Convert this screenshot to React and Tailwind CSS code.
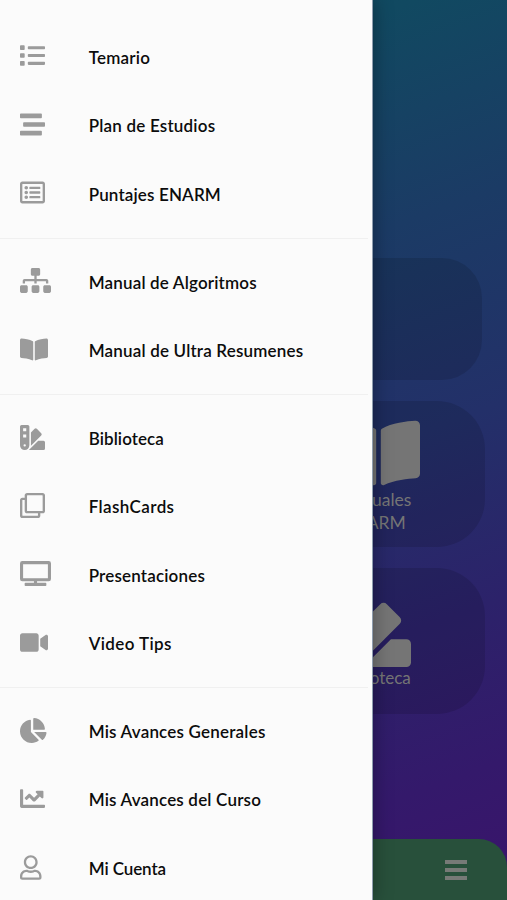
import React from 'react';
import {
  FaBookOpen,
  FaChartLine,
  FaChartPie,
  FaList,
  FaRegClone,
  FaRegListAlt,
  FaRegUser,
  FaSitemap,
  FaStream,
  FaSwatchbook,
  FaTv,
  FaVideo,
} from 'react-icons/fa';

const menuGroups = [
  [
    { label: 'Temario', icon: FaList, size: 'w-[25px]', spacing: 'tracking-[0.22px]' },
    { label: 'Plan de Estudios', icon: FaStream, size: 'w-[25px]', spacing: 'tracking-[0.2px]' },
    { label: 'Puntajes ENARM', icon: FaRegListAlt, size: 'w-[25px]', spacing: 'tracking-[0.15px]' },
  ],
  [
    { label: 'Manual de Algoritmos', icon: FaSitemap, size: 'w-[31px]', spacing: 'tracking-[0.17px]' },
    { label: 'Manual de Ultra Resumenes', icon: FaBookOpen, size: 'w-[28px]', spacing: 'tracking-[0.18px]' },
  ],
  [
    { label: 'Biblioteca', icon: FaSwatchbook, size: 'w-[25px]', spacing: 'tracking-[0.08px]' },
    { label: 'FlashCards', icon: FaRegClone, size: 'w-[25px]', spacing: 'tracking-[0.4px]' },
    { label: 'Presentaciones', icon: FaTv, size: 'w-[31px]', spacing: 'tracking-[0.17px]' },
    { label: 'Video Tips', icon: FaVideo, size: 'w-[28px]', spacing: 'tracking-[0.4px]' },
  ],
  [
    { label: 'Mis Avances Generales', icon: FaChartPie, size: 'w-[26.5px]', spacing: 'tracking-[0.2px]' },
    { label: 'Mis Avances del Curso', icon: FaChartLine, size: 'w-[25px]', spacing: 'tracking-[0.18px]' },
    { label: 'Mi Cuenta', icon: FaRegUser, size: 'w-[21.5px]', spacing: 'tracking-[-0.1px]' },
  ],
];

const MenuItem = ({ label, icon: Icon, size, spacing }) => (
  <a href="#" className="flex h-[68.4px] items-center pl-[20.3px]">
    <span className="flex w-[68.4px] shrink-0 pb-[3px]">
      <Icon className={`h-[25px] text-[#9b9b9b] ${size}`} />
    </span>
    <span className={`whitespace-nowrap text-[17px] font-semibold text-[#0c0c0c] ${spacing}`}>{label}</span>
  </a>
);

const Drawer = () => (
  <aside className="absolute inset-y-0 left-0 w-[372px] overflow-hidden border-r border-[#8f9dae] bg-[#fbfbfb] box-content pt-[23.3px] shadow-[0_0_18px_rgba(0,0,0,0.35)]">
    {menuGroups.map((group, i) => (
      <nav key={i} className={i > 0 ? 'mr-1 mt-[9.3px] border-t border-[#f0f0f0] pt-[9.3px]' : 'mr-1'}>
        {group.map((item) => (
          <MenuItem key={item.label} {...item} />
        ))}
      </nav>
    ))}
  </aside>
);

const App = () => (
  <div className="relative flex h-[900px] w-[507px] flex-col overflow-hidden bg-[linear-gradient(160deg,#104d5e_0%,#114961_14%,#1b3b65_34%,#233069_54%,#2c226a_72%,#34196b_87%,#3a146b_100%)] font-['Lato','Open_Sans',sans-serif]">
    <main className="flex flex-1 flex-col items-end pt-[258px]">
      <section className="mr-[25px] h-[122px] w-[223px] rounded-[40px] bg-black/12" />
      <section className="mr-[22px] mt-[21px] h-[146px] w-[223px] rounded-[48px] bg-black/12 pt-[15px]">
        <div className="ml-[75px] w-[83px] text-[#757575]">
          <FaBookOpen className="h-[74px] w-[83px]" />
          <p className="-mt-[2px] w-[75px] text-center text-[17.5px] leading-[23px]">
            Manuales ENARM
          </p>
        </div>
      </section>
      <section className="mr-[22px] mt-[21px] h-[146px] w-[223px] rounded-[48px] bg-black/12 pt-[25px]">
        <div className="ml-[75px] w-[74px] text-[#757575]">
          <FaSwatchbook className="h-[74px] w-[74px]" />
          <p className="-mt-px text-center text-[17px] leading-[23px]">Biblioteca</p>
        </div>
      </section>
    </main>
    <footer className="flex h-[61px] items-center justify-end rounded-t-[28px] bg-[#28503b] pr-[40px]">
      <div className="flex w-[22px] flex-col gap-1">
        <span className="h-[4px] bg-[#777a77]" />
        <span className="h-[4px] bg-[#777a77]" />
        <span className="h-[4px] bg-[#777a77]" />
      </div>
    </footer>
    <Drawer />
  </div>
);

export default App;
